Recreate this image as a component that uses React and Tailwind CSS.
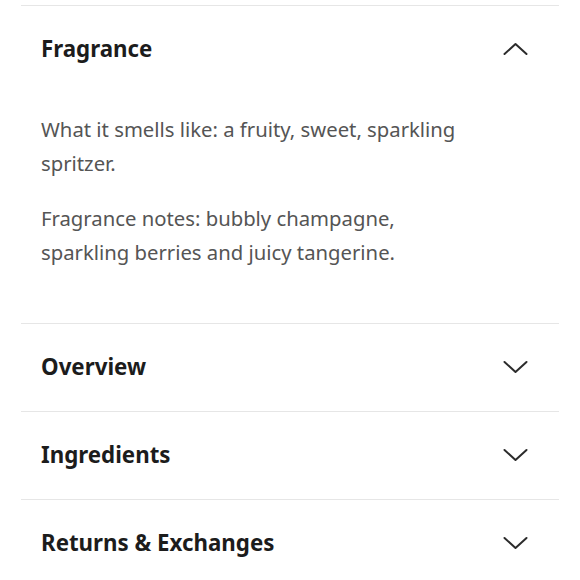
const sections = [
  { title: "Overview" },
  { title: "Ingredients" },
  { title: "Returns & Exchanges" },
];

function Chevron({ up }) {
  return (
    <svg width="25" height="14" viewBox="0 0 25 14" fill="none" className="shrink-0">
      <path
        d={up ? "M1.5 12 L12.5 2 L23.5 12" : "M1.5 2 L12.5 12 L23.5 2"}
        stroke="#2b2b2b"
        strokeWidth="2"
        strokeLinecap="round"
        strokeLinejoin="round"
      />
    </svg>
  );
}

export default function App() {
  return (
    <div className="min-h-[580px] bg-white px-[21px] pt-[5px] font-['Noto_Sans',sans-serif]">
      <div className="border-t border-[#e6e6e6]">
        <div className="flex h-[87px] items-center justify-between pb-[2px] pl-[20px] pr-[31px]">
          <h3 className="text-[22.3px] font-bold text-[#1c1c1c]">Fragrance</h3>
          <Chevron up />
        </div>
        <div className="space-y-[22px] px-[20px] pb-[54px] pt-[20px] text-[20.3px] leading-[33.5px] text-[#555]">
          <p>
            What it smells like: a fruity, sweet, sparkling
            <br />
            spritzer.
          </p>
          <p>
            Fragrance notes: bubbly champagne,
            <br />
            sparkling berries and juicy tangerine.
          </p>
        </div>
      </div>

      {sections.map((s) => (
        <div key={s.title} className="border-t border-[#e6e6e6]">
          <div className="flex h-[87px] items-center justify-between pb-[2px] pl-[20px] pr-[31px]">
            <h3 className="text-[22.3px] font-bold text-[#1c1c1c]">{s.title}</h3>
            <Chevron />
          </div>
        </div>
      ))}
    </div>
  );
}
